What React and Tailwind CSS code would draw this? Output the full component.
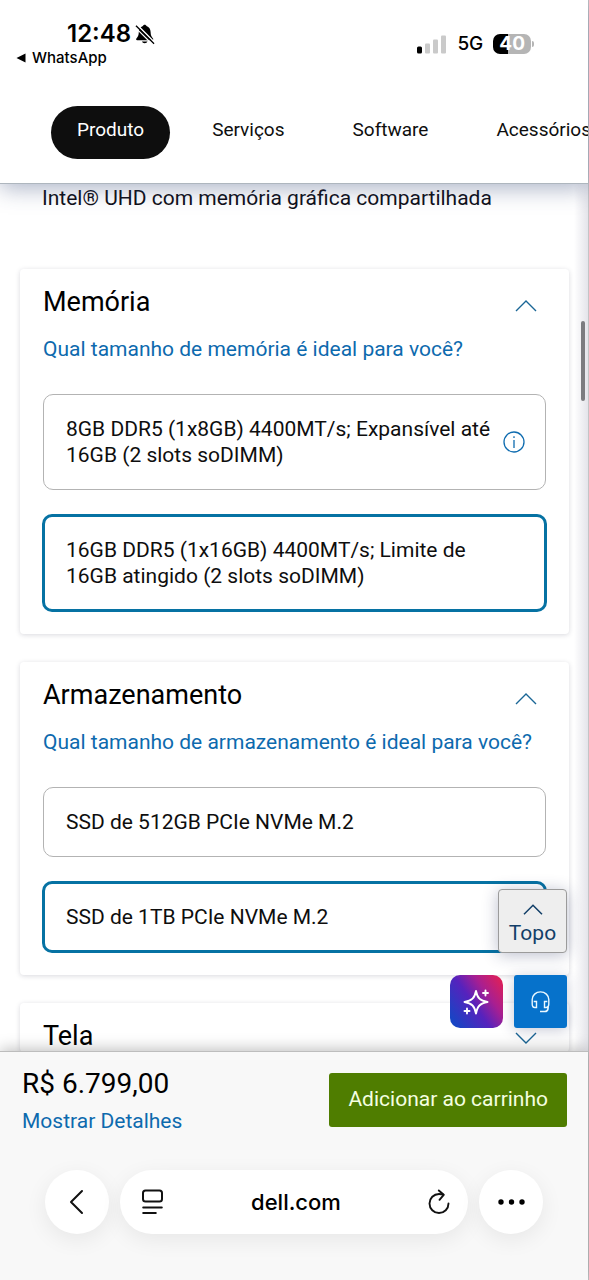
import React from "react";

const TABS = ["Produto", "Serviços", "Software", "Acessórios"];

const SECTIONS = [
  {
    id: "memoria",
    title: "Memória",
    help: "Qual tamanho de memória é ideal para você?",
    options: [
      { text: "8GB DDR5 (1x8GB) 4400MT/s; Expansível até 16GB (2 slots soDIMM)", info: true },
      { text: "16GB DDR5 (1x16GB) 4400MT/s; Limite de 16GB atingido (2 slots soDIMM)", selected: true },
    ],
  },
  {
    id: "armazenamento",
    title: "Armazenamento",
    help: "Qual tamanho de armazenamento é ideal para você?",
    options: [
      { text: "SSD de 512GB PCIe NVMe M.2" },
      { text: "SSD de 1TB PCIe NVMe M.2", selected: true },
    ],
  },
];

function Chevron({ down = false, className = "text-[#1a6696]" }) {
  return (
    <svg width="24" height="14" viewBox="0 0 24 14" fill="none" stroke="currentColor" strokeWidth="1.4" className={className} aria-hidden="true">
      <path d={down ? "M2 2 12 12 22 2" : "M2 12 12 2 22 12"} />
    </svg>
  );
}

function InfoIcon() {
  return (
    <svg width="22" height="22" viewBox="0 0 22 22" fill="none" stroke="currentColor" strokeWidth="1.3" aria-hidden="true">
      <circle cx="11" cy="11" r="10" />
      <path d="M11 9v8M11 5.3v1.7" />
    </svg>
  );
}

function BellOff() {
  return (
    <svg width="20" height="21" viewBox="0 0 20 21" aria-hidden="true">
      <path d="M9.7 0.8c-0.9 0-1.6.6-1.8 1.3C5.2 3 3.900 5.200 3.800 8c-.1 3.400-.8 4.800-2.200 6.200-.7.700-.7 2 .6 2h15c1.300 0 1.300-1.300.6-2-1.400-1.400-2.100-2.800-2.200-6.200-.1-2.800-1.400-5-4.100-5.900-.2-.7-.9-1.300-1.800-1.300ZM6.900 17.400a2.900 2.400 0 0 0 5.600 0Z" fill="#000" />
      <path d="M1.600 0.400 19.600 18.400" stroke="#fff" strokeWidth="1.600" />
      <path d="M1 1.800 19 19.800" stroke="#000" strokeWidth="1.500" />
      <path d="M0.400 3.600 18 21" stroke="#fff" strokeWidth="1.200" />
    </svg>
  );
}

function StatusBar() {
  return (
    <div className="flex items-start justify-between pt-5 pr-[54px] pl-4 font-['Inter',sans-serif] text-black">
      <div>
        <div className="flex items-center gap-1 pl-[51px]">
          <span className="text-2xl leading-7 font-semibold">12:48</span>
          <BellOff />
        </div>
        <a href="#whatsapp" className="flex items-center gap-[6px] text-[15px] leading-5 font-medium">
          <svg width="10" height="10" viewBox="0 0 10 10" aria-hidden="true">
            <path d="M0.500 5 9.500 0.500v9Z" />
          </svg>
          WhatsApp
        </a>
      </div>
      <div className="flex items-center gap-[10px] pt-3">
        <svg width="30" height="19" viewBox="0 0 30 19" aria-hidden="true">
          <rect x="0" y="11.500" width="5" height="7" rx="1.500" />
          <g fill="#cacaca">
            <rect x="8" y="8.500" width="5" height="10" rx="1" />
            <rect x="16" y="4.500" width="5" height="14" rx="1" />
            <rect x="24" y="0.500" width="5" height="18" rx="1" />
          </g>
        </svg>
        <span className="text-[19px] leading-6 font-medium">5G</span>
        <div className="flex items-center gap-px">
          <span className="rounded-[7px] bg-linear-to-r from-black from-40% to-[#b5b5b5] to-40% px-[6px] text-[19px] leading-5 font-bold text-white">40</span>
          <span className="h-[6px] w-[2px] rounded-r bg-[#b5b5b5]" />
        </div>
      </div>
    </div>
  );
}

function Option({ name, option }) {
  const frame = option.selected
    ? "-m-px border-[3px] border-[#0672a3] py-5 pr-[19px] pl-[21px]"
    : "border border-[#b3b3b3] py-[21px] pr-5 pl-[22px]";
  return (
    <label className={`flex items-center rounded-[10px] text-[21px] leading-[26px] text-[#0e0e0e] ${frame}`}>
      <input type="radio" name={name} defaultChecked={option.selected} className="sr-only" />
      <span className="flex-1">{option.text}</span>
      <span className="flex w-[22px] justify-center">
        {option.info && (
          <button type="button" aria-label="Mais informações" className="text-[#0f6cb0]">
            <InfoIcon />
          </button>
        )}
      </span>
    </label>
  );
}

const CARD = "rounded-sm bg-white px-[23px] pt-[17px] shadow-[0_1px_5px_rgba(30,30,60,0.17)]";

function Section({ section }) {
  return (
    <section className={`${CARD} pb-[23px]`}>
      <div className="flex items-center justify-between">
        <h2 className="text-[27px] leading-8 text-black">{section.title}</h2>
        <button type="button" aria-label={`Recolher ${section.title}`} className="mr-2 pt-2">
          <Chevron />
        </button>
      </div>
      <a href={`#${section.id}`} className="mt-[19px] block text-[21px] leading-6 text-[#0d6aae]">{section.help}</a>
      <div className="mt-[33px] flex flex-col gap-[25px]">
        {section.options.map((o) => (
          <Option key={o.text} name={section.id} option={o} />
        ))}
      </div>
    </section>
  );
}

function FloatingActions() {
  return (
    <div className="absolute right-[21px] bottom-[23px] flex flex-col items-end gap-[22px]">
      <button type="button" className="flex h-16 w-[69px] flex-col items-center rounded-sm border border-[#9b9b9b] bg-[#eeeeee] pt-[14px] text-[21px] leading-7 text-[#123f68] shadow-[0_2px_16px_rgba(30,40,90,0.3)]">
        <svg width="20" height="11" viewBox="0 0 20 11" fill="none" stroke="currentColor" strokeWidth="1.500" className="mb-1 shrink-0" aria-hidden="true">
          <path d="M1 10.200 10 1.200 19 10.200" />
        </svg>
        Topo
      </button>
      <div className="flex gap-[11px]">
        <button type="button" aria-label="Assistente de IA" className="flex size-[53px] items-center justify-center rounded-[10px] bg-linear-[55deg,#1745c4_8%,#5622bd_45%,#a81f91_68%,#df2058_95%]">
          <svg width="27" height="26" viewBox="0 0 27 26" fill="none" stroke="#fff" strokeWidth="1.900" strokeLinejoin="round" strokeLinecap="round" aria-hidden="true">
            <path d="M13 2c1.400 7 4 9.600 11.500 11-7.500 1.400-10.100 4-11.500 11.500C11.600 17 9 14.400 1.500 13 9 11.600 11.600 9 13 2Z" />
            <path d="M22.500 1.500v5M20 4h5M4 19.500v5M1.500 22h5" />
          </svg>
        </button>
        <button type="button" aria-label="Atendimento" className="flex size-[53px] items-center justify-center rounded-[3px] bg-[#0672cb] shadow-[0_2px_14px_rgba(30,40,90,0.25)]">
          <svg width="19" height="22" viewBox="0 0 19 22" fill="none" stroke="#eaf8ff" strokeWidth="1.400" aria-hidden="true">
            <path d="M1.200 13V8.500a8.200 7.500 0 0 1 16.600 0V13" />
            <path d="M2.700 10.500h2.800v6H3.800C2.200 16.500 1.200 15.200 1.200 13M16.300 10.500h-2.800v6h1.700c1.600 0 2.600-1.300 2.600-3.500" />
            <path d="M17 15.500v1.700c0 2-1.500 3.300-3.500 3.300H9" strokeWidth="1.700" />
          </svg>
        </button>
      </div>
    </div>
  );
}

function Footer() {
  const glass = "flex h-16 items-center bg-white shadow-[0_6px_22px_rgba(0,0,0,0.07)]";
  return (
    <footer className="relative z-10 border-t border-[#bdbdbd] bg-[#f8f8f8] pb-[46px] shadow-[0_-2px_14px_rgba(0,0,0,0.25)]">
      <div className="flex items-start justify-between pt-[21px] pr-[21px] pl-[22px]">
        <div>
          <p className="-mt-[5px] text-[28px] leading-8 text-black">R$ 6.799,00</p>
          <a href="#detalhes" className="mt-[9px] block text-[21px] leading-6 text-[#0d6aae]">Mostrar Detalhes</a>
        </div>
        <button type="button" className="h-[54px] rounded-[3px] bg-[#4f7d00] px-[19px] text-[21px] text-[#f5ffe0]">Adicionar ao carrinho</button>
      </div>
      <nav aria-label="Navegador" className="mt-[37px] flex gap-[11px] px-[45px]">
        <button type="button" aria-label="Voltar" className={`${glass} w-16 justify-center rounded-full`}>
          <svg width="16" height="26" viewBox="0 0 16 26" fill="none" stroke="#111" strokeWidth="2" strokeLinecap="round" strokeLinejoin="round" aria-hidden="true">
            <path d="M13 2 2 13 13 24" />
          </svg>
        </button>
        <div className={`${glass} flex-1 justify-between rounded-full pr-[18px] pl-[22px]`}>
          <button type="button" aria-label="Menu da página">
            <svg width="22" height="26" viewBox="0 0 22 26" fill="none" stroke="#111" strokeWidth="2" strokeLinecap="round" aria-hidden="true">
              <rect x="1" y="1.500" width="19" height="11" rx="2.500" />
              <path d="M1.200 18.500h18.600M1.200 24h12.600" />
            </svg>
          </button>
          <span className="font-['Inter',sans-serif] text-[22px] font-medium text-black">dell.com</span>
          <button type="button" aria-label="Recarregar">
            <svg width="22" height="26" viewBox="0 0 22 26" fill="none" stroke="#111" strokeWidth="1.900" strokeLinecap="round" strokeLinejoin="round" aria-hidden="true">
              <path d="M20.500 14.500a9.500 9.500 0 1 1-9.500-9.500c1.600 0 3 .3 4.400.7" />
              <path d="M10.800 1.500 15.700 5.800 11.500 10.800" />
            </svg>
          </button>
        </div>
        <button type="button" aria-label="Mais" className={`${glass} w-16 justify-center rounded-full`}>
          <svg width="27" height="6" viewBox="0 0 27 6" aria-hidden="true">
            <circle cx="3" cy="3" r="2.700" />
            <circle cx="13.500" cy="3" r="2.700" />
            <circle cx="24" cy="3" r="2.700" />
          </svg>
        </button>
      </nav>
    </footer>
  );
}

export default function App() {
  return (
    <div className="flex h-screen flex-col border-r border-[#c4c4c6] bg-white font-['Roboto',sans-serif]">
      <header className="relative z-10 border-b border-[#aeb6be] bg-white shadow-[0_4px_22px_rgba(40,60,110,0.4)]">
        <StatusBar />
        <nav aria-label="Categorias" className="flex gap-4 overflow-hidden pt-[38px] pb-6 pl-[51px]">
          {TABS.map((tab, i) => (
            <button key={tab} type="button" className={`h-[53px] shrink-0 rounded-full px-[26px] pb-1 text-[19px] ${i === 0 ? "bg-[#0e0e0e] text-white" : "text-[#0e0e0e]"}`}>
              {tab}
            </button>
          ))}
        </nav>
      </header>

      <div className="relative min-h-0 flex-1">
        <main className="flex h-full flex-col gap-7 overflow-hidden bg-linear-to-l from-[#e4e4ea] to-white to-[14px] pr-[19px] pl-5">
          <p className="mb-[31px] pt-[2px] pl-[22px] text-[21px] leading-6 text-[#101018]">Intel® UHD com memória gráfica compartilhada</p>
          {SECTIONS.map((s) => (
            <Section key={s.id} section={s} />
          ))}
          <section className={CARD}>
            <div className="flex items-center justify-between">
              <h2 className="text-[27px] leading-8 text-black">Tela</h2>
              <button type="button" aria-label="Expandir Tela" className="mr-2 pt-1">
                <Chevron down />
              </button>
            </div>
          </section>
        </main>
        <span className="absolute top-[137px] right-[3px] h-20 w-1 rounded-full bg-[#7c7c80]" />
        <FloatingActions />
      </div>

      <Footer />
    </div>
  );
}
